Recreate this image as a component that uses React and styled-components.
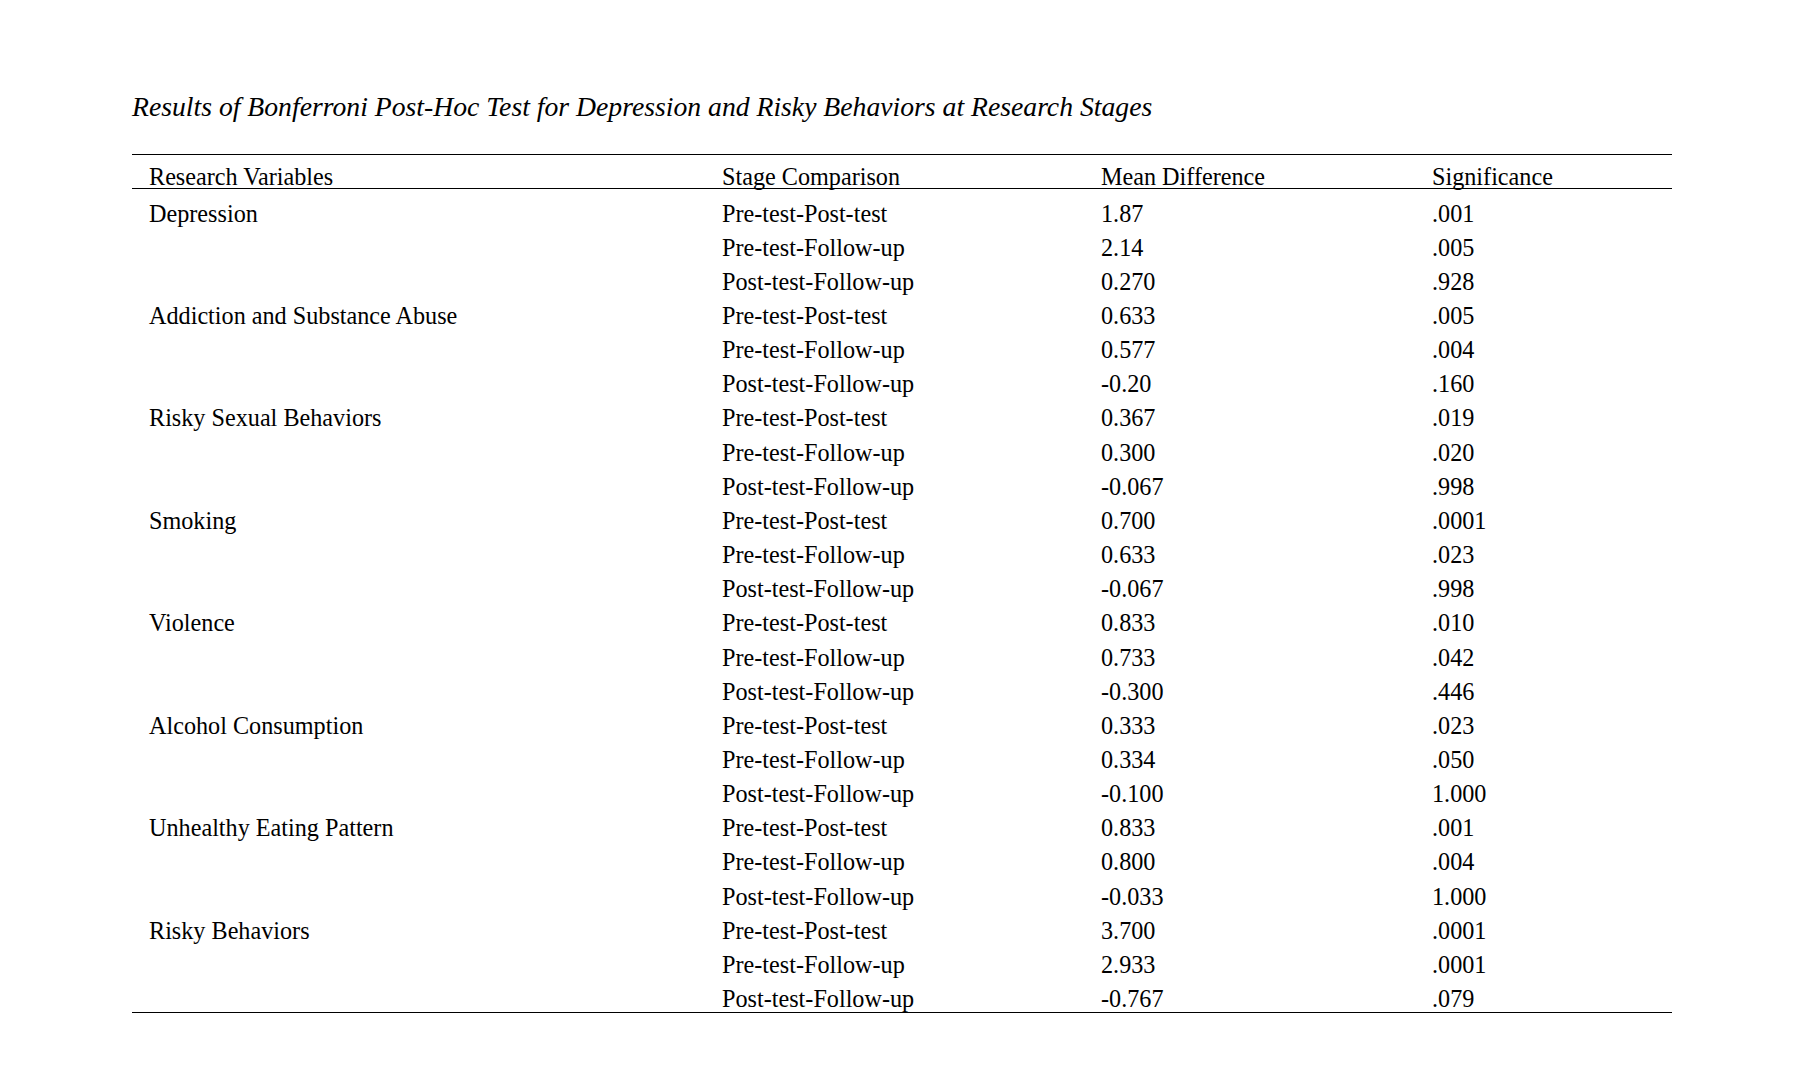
import React from "react";
import styled, { createGlobalStyle } from "styled-components";

const Global = createGlobalStyle`
  html, body { margin: 0; padding: 0; background: #fff; }
  body { font-family: "Liberation Serif", "Times New Roman", serif; color: #000; }
`;

const Page = styled.div`
  width: 1804px;
  min-height: 1070px;
  box-sizing: border-box;
  padding: 0 132px 0 132px;
`;

const Title = styled.h1`
  margin: 0;
  padding-top: 92px;
  font-weight: normal;
  font-style: italic;
  font-size: 27.7px;
  line-height: 30px;
  height: 62px;
  width: 1540px;
`;

const Table = styled.div`
  width: 1540px;
  border-top: 1px solid #000;
  border-bottom: 1px solid #000;
  font-size: 24.2px;
  line-height: 24px;
`;

const Row = styled.div`
  display: grid;
  grid-template-columns: 573px 379px 331px 1fr;
  padding-left: 17px;
  box-sizing: border-box;
  height: ${(p) => (p.$head ? "34px" : "34.16px")};
  padding-top: ${(p) => (p.$head ? "10px" : "12.5px")};
  border-bottom: ${(p) => (p.$head ? "1px solid #000" : "none")};
  white-space: nowrap;
`;

const Cell = styled.span``;

const Body = styled.div`
  padding-bottom: 3px;
`;

const groups = [
  ["Depression", [["1.87", ".001"], ["2.14", ".005"], ["0.270", ".928"]]],
  ["Addiction and Substance Abuse", [["0.633", ".005"], ["0.577", ".004"], ["-0.20", ".160"]]],
  ["Risky Sexual Behaviors", [["0.367", ".019"], ["0.300", ".020"], ["-0.067", ".998"]]],
  ["Smoking", [["0.700", ".0001"], ["0.633", ".023"], ["-0.067", ".998"]]],
  ["Violence", [["0.833", ".010"], ["0.733", ".042"], ["-0.300", ".446"]]],
  ["Alcohol Consumption", [["0.333", ".023"], ["0.334", ".050"], ["-0.100", "1.000"]]],
  ["Unhealthy Eating Pattern", [["0.833", ".001"], ["0.800", ".004"], ["-0.033", "1.000"]]],
  ["Risky Behaviors", [["3.700", ".0001"], ["2.933", ".0001"], ["-0.767", ".079"]]],
];

const stages = ["Pre-test-Post-test", "Pre-test-Follow-up", "Post-test-Follow-up"];

export default function App() {
  return (
    <Page>
      <Global />
      <Title>Results of Bonferroni Post-Hoc Test for Depression and Risky Behaviors at Research Stages</Title>
      <Table>
        <Row $head>
          <Cell>Research Variables</Cell>
          <Cell>Stage Comparison</Cell>
          <Cell>Mean Difference</Cell>
          <Cell>Significance</Cell>
        </Row>
        <Body>
          {groups.map(([name, vals]) =>
            vals.map((v, i) => (
              <Row key={name + i}>
                <Cell>{i === 0 ? name : ""}</Cell>
                <Cell>{stages[i]}</Cell>
                <Cell>{v[0]}</Cell>
                <Cell>{v[1]}</Cell>
              </Row>
            ))
          )}
        </Body>
      </Table>
    </Page>
  );
}
